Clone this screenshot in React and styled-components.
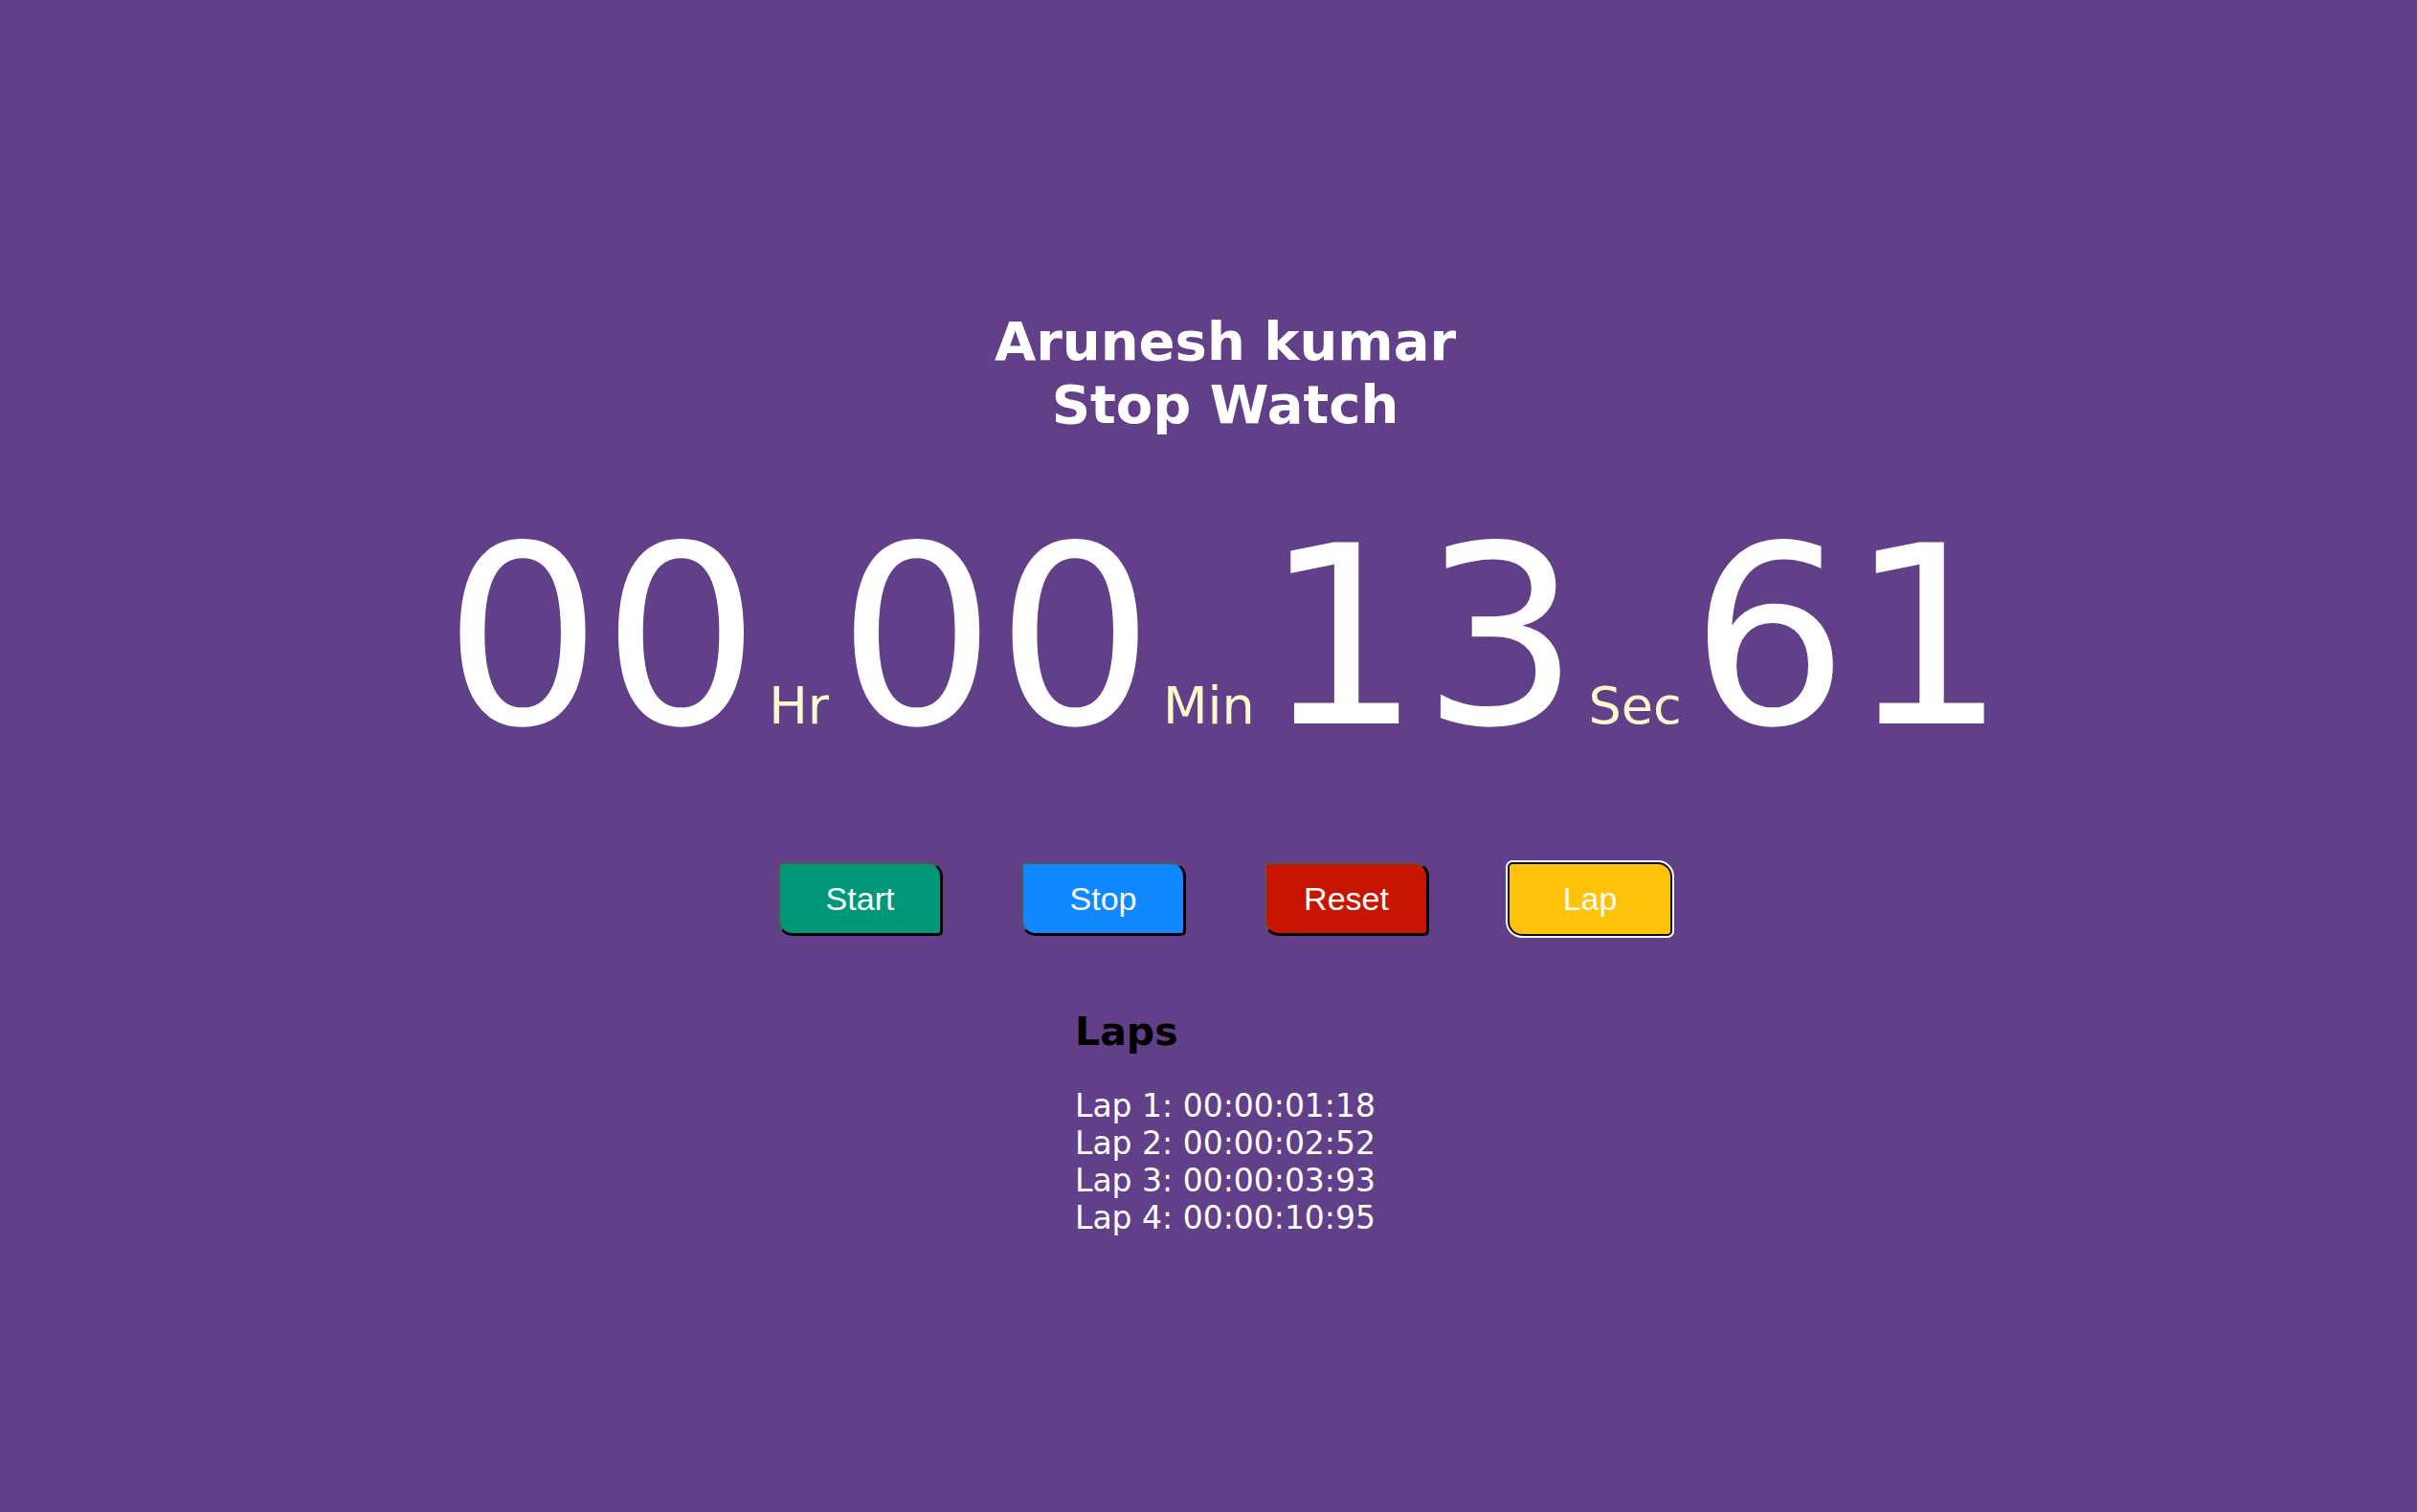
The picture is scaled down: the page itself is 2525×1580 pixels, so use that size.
import React from "react";
import styled, { createGlobalStyle } from "styled-components";

const Global = createGlobalStyle`
  html, body {
    margin: 0;
    padding: 0;
    background: #613f89;
  }
  body {
    font-family: "DejaVu Sans", Verdana, sans-serif;
    min-height: 1580px;
  }
`;

const Page = styled.main`
  display: flex;
  flex-direction: column;
  align-items: center;
  padding: 324px 0 0 35px;
  min-height: 1580px;
  box-sizing: border-box;
  background: #613f89;
`;

const Title = styled.h1`
  margin: 0;
  font-family: "DejaVu Sans", Verdana, sans-serif;
  font-weight: 700;
  font-size: 56px;
  line-height: 66px;
  color: #ffffff;
  text-align: center;
`;

const Display = styled.div`
  display: flex;
  align-items: baseline;
  gap: 9px;
  margin-top: 80px;
  height: 260px;
  line-height: 260px;
`;

const Digits = styled.span`
  font-family: "DejaVu Sans", Verdana, sans-serif;
  font-size: 260px;
  color: #ffffff;
`;

const Unit = styled.span`
  font-family: "DejaVu Sans", Verdana, sans-serif;
  font-size: 54px;
  line-height: 54px;
  color: #fffacd;
`;

const Controls = styled.div`
  display: flex;
  gap: 82px;
  margin-top: 105px;
`;

const Button = styled.button`
  box-sizing: border-box;
  width: 172px;
  height: 77px;
  padding: 0;
  font-family: "Liberation Sans", Arial, sans-serif;
  font-size: 34px;
  color: #ffffff;
  background: ${(p) => p.$bg};
  border-style: solid;
  border-width: ${(p) => (p.$focused ? "2px" : "2px 3px 3px 2px")};
  border-color: ${(p) => (p.$focused ? "#101010" : "#555 #000 #000 #555")};
  border-radius: 5px 15px 5px 15px;
  box-shadow: ${(p) => (p.$focused ? "0 0 0 2px #ffffff" : "none")};
  cursor: pointer;
`;

const LapsBox = styled.section`
  margin-top: 76px;
  display: flex;
  flex-direction: column;
  align-items: flex-start;
`;

const LapsHeading = styled.h2`
  margin: 0;
  font-family: "DejaVu Sans", Verdana, sans-serif;
  font-weight: 700;
  font-size: 41px;
  color: #000000;
`;

const LapList = styled.ul`
  list-style: none;
  margin: 34px 0 0 0;
  padding: 0;
`;

const LapItem = styled.li`
  font-family: "DejaVu Sans", Verdana, sans-serif;
  font-size: 33px;
  line-height: 39px;
  color: #ffffff;
  white-space: nowrap;
`;

const laps = ["00:00:01:18", "00:00:02:52", "00:00:03:93", "00:00:10:95"];

const buttons = [
  { label: "Start", bg: "#009879" },
  { label: "Stop", bg: "#1088ff" },
  { label: "Reset", bg: "#c81500" },
  { label: "Lap", bg: "#ffc20a", focused: true },
];

export default function App() {
  return (
    <>
      <Global />
      <Page>
        <Title>
          Arunesh kumar
          <br />
          Stop Watch
        </Title>
        <Display>
          <Digits>00</Digits>
          <Unit>Hr</Unit>
          <Digits>00</Digits>
          <Unit>Min</Unit>
          <Digits>13</Digits>
          <Unit>Sec</Unit>
          <Digits>61</Digits>
        </Display>
        <Controls>
          {buttons.map((b) => (
            <Button key={b.label} $bg={b.bg} $focused={b.focused}>
              {b.label}
            </Button>
          ))}
        </Controls>
        <LapsBox>
          <LapsHeading>Laps</LapsHeading>
          <LapList>
            {laps.map((t, i) => (
              <LapItem key={i}>
                Lap {i + 1}: {t}
              </LapItem>
            ))}
          </LapList>
        </LapsBox>
      </Page>
    </>
  );
}
